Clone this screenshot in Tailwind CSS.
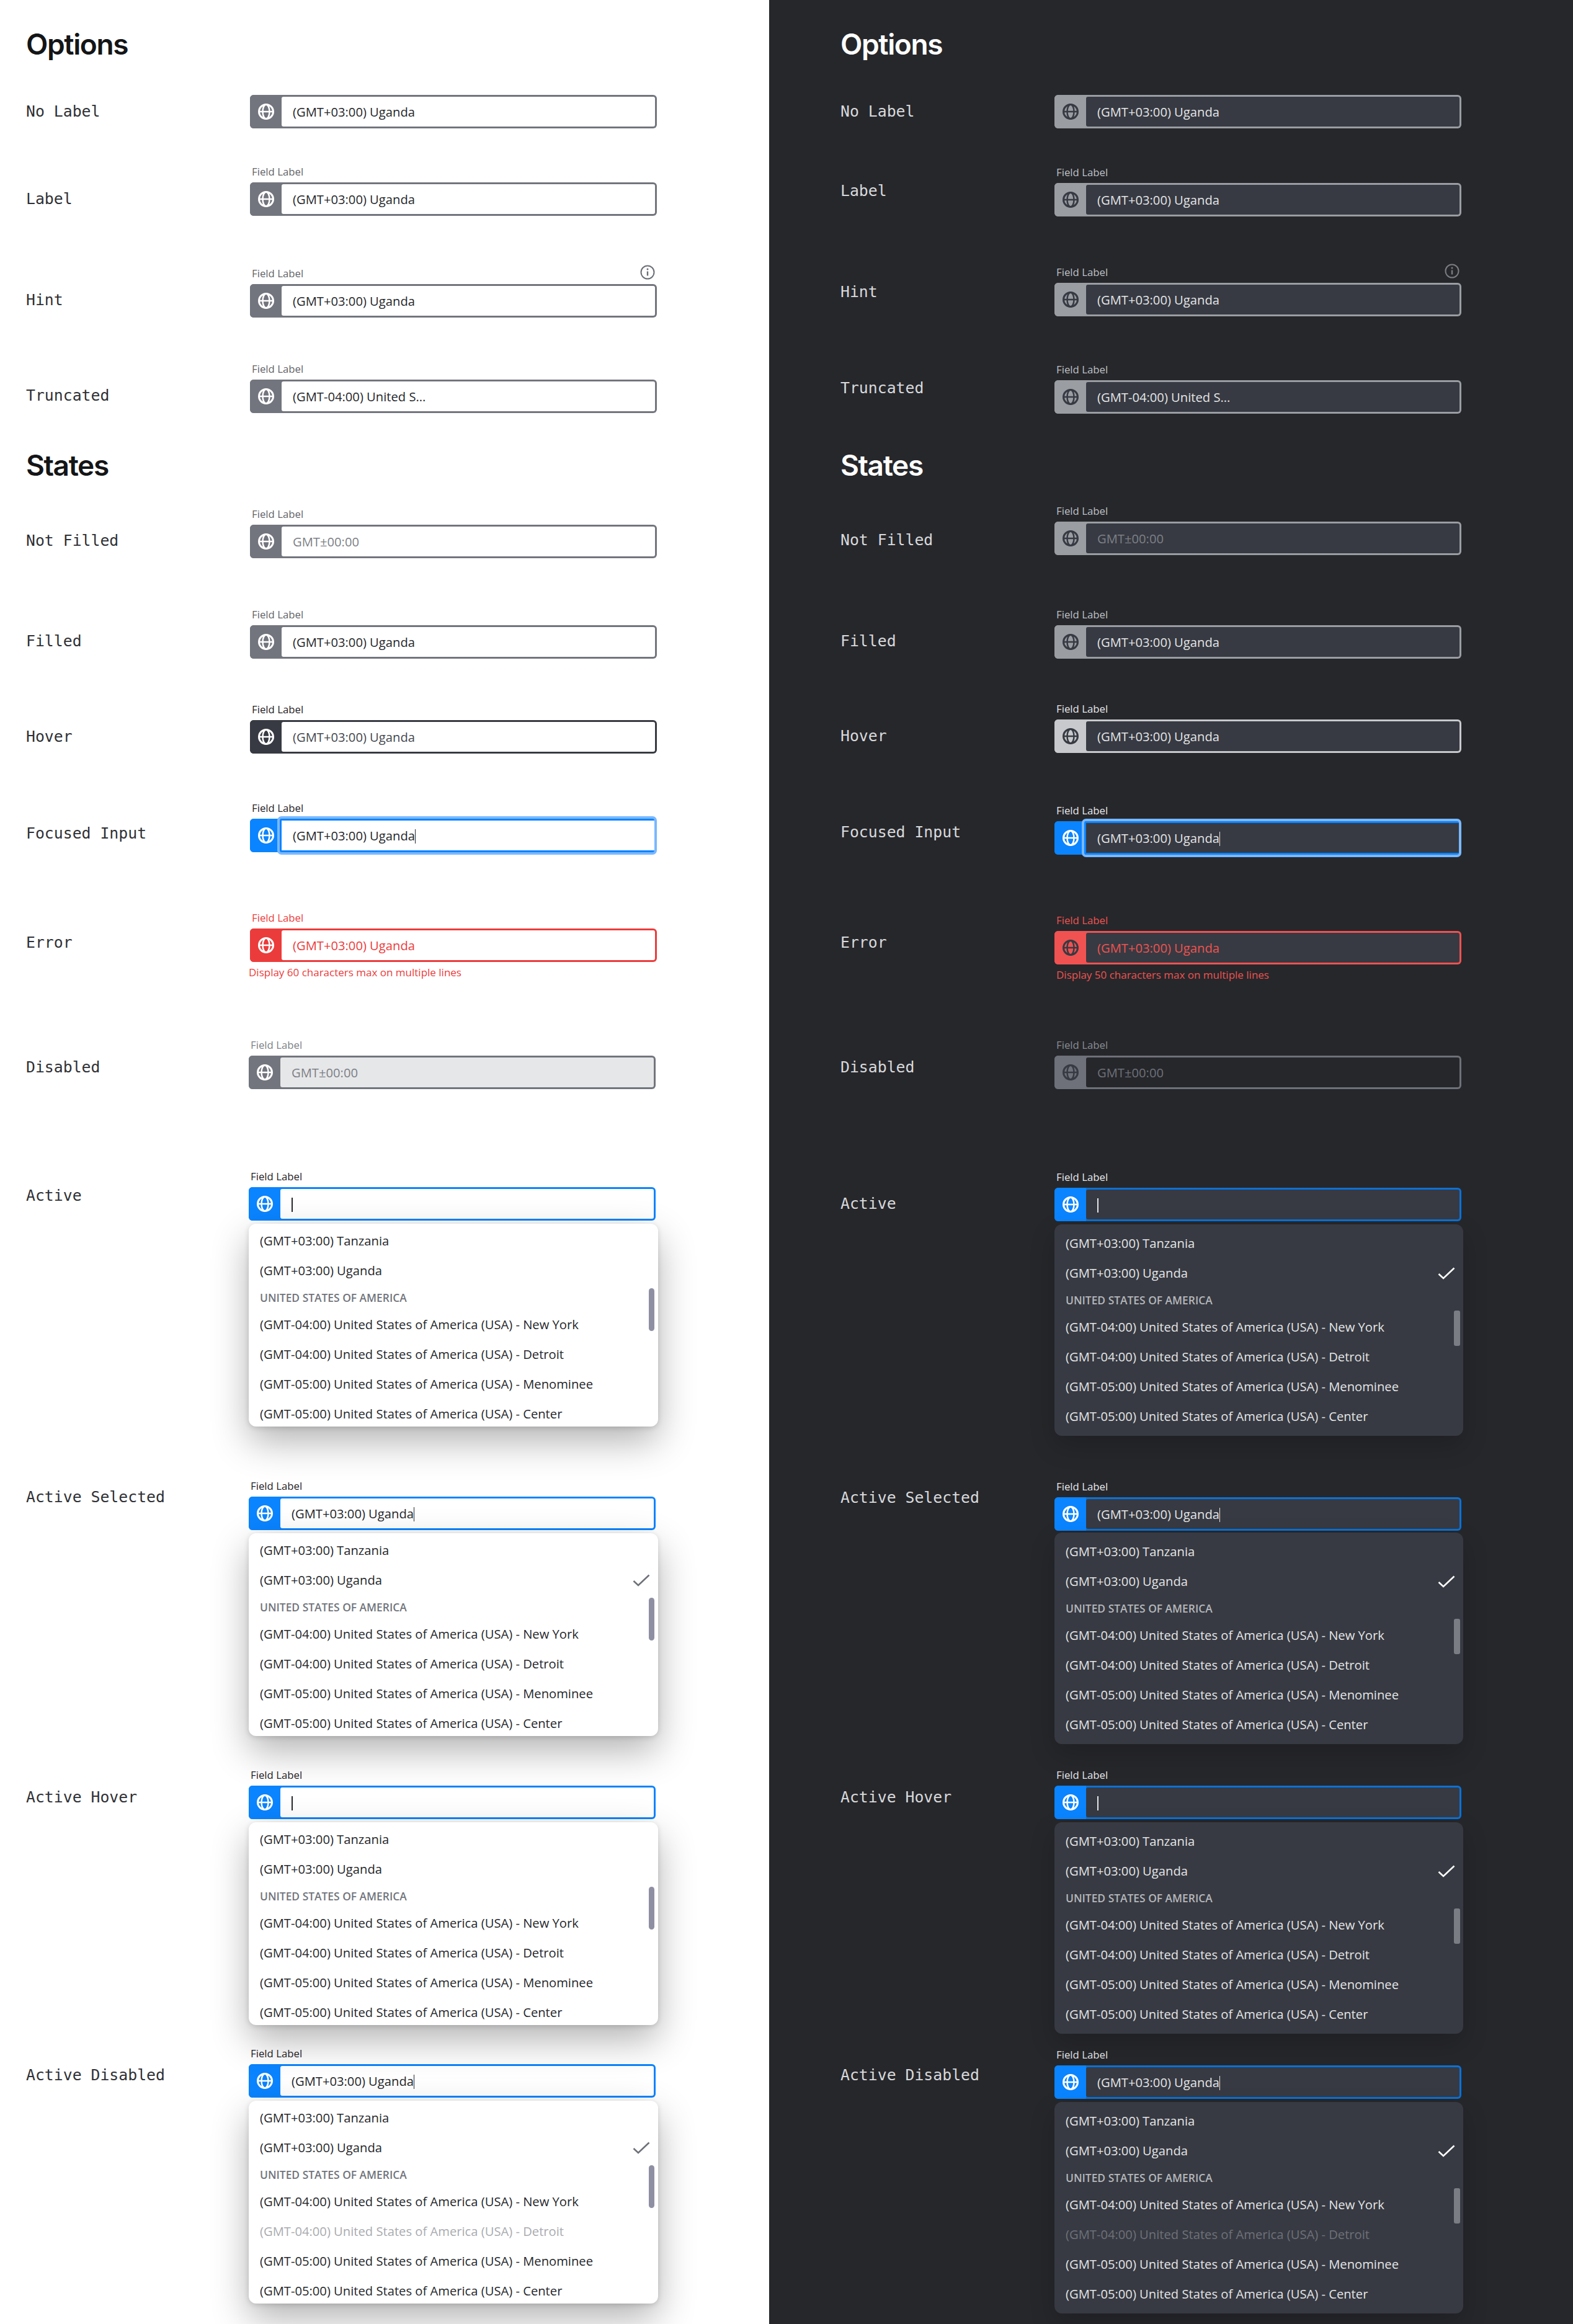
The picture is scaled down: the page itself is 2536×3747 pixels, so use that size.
<!DOCTYPE html>
<html lang="en">
<head>
  <meta charset="UTF-8" />
  <title>Timezone Select</title>
  <script src="https://cdn.jsdelivr.net/npm/@tailwindcss/browser@4"></script>
</head>
<body class="font-['Open_Sans',sans-serif]">
  <div class="flex w-[2536px] h-[3747px] overflow-hidden">
    <div id="light" class="w-[1240px] h-full shrink-0 bg-white pl-[42px] pt-[43px] text-[#25272b]"></div>
    <div id="dark" class="w-[1296px] h-full shrink-0 bg-[#26272b] pl-[115px] pt-[43px] text-white"></div>
  </div>

  <script>
    const globe = `<svg class="w-[26px] h-[26px]" viewBox="0 0 26 26" fill="none" stroke="currentColor"><circle cx="13" cy="13" r="11.5" stroke-width="3"/><ellipse cx="13" cy="13" rx="5.5" ry="11.5" stroke-width="2.5"/><path d="M2 13h22" stroke-width="2.5"/></svg>`;
    const info = `<svg class="w-[24px] h-[24px] mb-[4px] mr-[3px]" viewBox="0 0 24 24" fill="none" stroke="currentColor"><circle cx="12" cy="12" r="10.5" stroke-width="2"/><path d="M12 10.5v7" stroke-width="2.4"/><circle cx="12" cy="7" r="1.5" fill="currentColor" stroke="none"/></svg>`;
    const check = `<svg class="w-[28px] h-[20px]" viewBox="0 0 28 20" fill="none" stroke="currentColor" stroke-width="2.6"><path d="M1.5 11l7.5 7L26.5 1.5"/></svg>`;

    const themes = {
      light: {
        title: "text-[#141517]",
        rowLabel: "w-[361px] shrink-0 text-[#2f3135]",
        hint: "text-[#6b6f76]",
        helper: "text-[#ec3b3b]",
        checkColor: "absolute right-[13px] top-[66px] text-[#6e7178]",
        menu: "relative z-10 mt-[5px] w-[660px] h-[327px] overflow-hidden rounded-[12px] bg-white pt-[5px] shadow-[0_24px_60px_rgba(0,0,0,0.3),0_2px_8px_rgba(0,0,0,0.15)]",
        thumb: "absolute right-[6px] top-[104px] w-[9px] h-[69px] rounded-full bg-[#8e8fa2]",
        group: "text-[#71747c]",
        item: "text-[#25272b]",
        itemOff: "text-[#a9abaf]",
        caret: "bg-[#25272b]",
        normal: { label: "text-[#5f6368]", shell: "bg-[#72757d]", block: "bg-[#72757d] text-white", inner: "bg-white", text: "text-[#25272b]" },
        empty: { label: "text-[#5f6368]", shell: "bg-[#72757d]", block: "bg-[#72757d] text-white", inner: "bg-white", text: "text-[#7c7f86]" },
        hover: { label: "text-[#1f2125]", shell: "bg-[#373a42]", block: "bg-[#373a42] text-white", inner: "bg-white", text: "text-[#44474e]" },
        focus: { label: "text-[#1f2125]", shell: "bg-[#0a84ff]", block: "bg-[#0a84ff] text-white", inner: "bg-white", text: "text-[#25272b]" },
        error: { label: "text-[#ec3b3b]", shell: "bg-[#ec3b3b]", block: "bg-[#ec3b3b] text-white", inner: "bg-white", text: "text-[#ec3b3b]" },
        disabled: { label: "text-[#7c7f86]", shell: "bg-[#72757d]", block: "bg-[#72757d] text-white", inner: "bg-[#e6e7e9]", text: "text-[#7c7f86]" },
        active: { label: "text-[#1f2125]", shell: "bg-[#0a84ff]", block: "bg-[#0a84ff] text-white", inner: "bg-white", text: "text-[#25272b]" }
      },
      dark: {
        title: "text-white",
        rowLabel: "w-[345px] shrink-0 text-[#d8d9dc]",
        hint: "text-[#7a7d83]",
        helper: "text-[#ef5350]",
        checkColor: "absolute right-[13px] top-[69px] text-white",
        menu: "relative z-10 mt-[5px] w-[659px] h-[341px] overflow-hidden rounded-[12px] bg-[#373a42] pt-[8px] shadow-[0_16px_40px_rgba(0,0,0,0.18)]",
        thumb: "absolute right-[5px] top-[139px] w-[10px] h-[57px] rounded-[3px] bg-[#7a7d84]",
        group: "text-[#b5b7bb]",
        item: "text-[#e4e5e7]",
        itemOff: "text-[#6e7179]",
        caret: "bg-[#e4e5e7]",
        normal: { label: "text-[#bfc1c5]", shell: "bg-[#9a9da2]", block: "bg-[#9a9da2] text-[#373a42]", inner: "bg-[#373a42]", text: "text-[#e4e5e7]" },
        empty: { label: "text-[#bfc1c5]", shell: "bg-[#9a9da2]", block: "bg-[#9a9da2] text-[#373a42]", inner: "bg-[#373a42]", text: "text-[#7d8087]" },
        hover: { label: "text-[#e8e9ea]", shell: "bg-[#c8c9cc]", block: "bg-[#c8c9cc] text-[#373a42]", inner: "bg-[#373a42]", text: "text-[#e4e5e7]" },
        focus: { label: "text-[#e8e9ea]", shell: "bg-[#0a84ff]", block: "bg-[#0a84ff] text-white", inner: "bg-[#373a42]", text: "text-[#e4e5e7]" },
        error: { label: "text-[#ef5350]", shell: "bg-[#f05252]", block: "bg-[#f05252] text-[#373a42]", inner: "bg-[#373a42]", text: "text-[#ef5350]" },
        disabled: { label: "text-[#8a8d92]", shell: "bg-[#6e7179]", block: "bg-[#6e7179] text-[#373a42]", inner: "bg-[#26272b]", text: "text-[#6e7179]" },
        active: { label: "text-[#e8e9ea]", shell: "bg-[#0a72d8]", block: "bg-[#0a84ff] text-white", inner: "bg-[#373a42]", text: "text-[#e4e5e7]" }
      }
    };

    function field(t, r) {
      const s = t[r.state];
      const caret = r.caret ? `<span class="inline-block w-[1.5px] h-[23px] ${t.caret} align-[-5px]"></span>` : "";
      const innerClass = r.state === "focus"
        ? "relative flex-1 ml-[-3px] my-0 mr-[4px] border-y-[3px] border-l-[3px] border-[#0a84ff] rounded-[3px] pl-[18px] flex items-center shadow-[0_0_0_4px_#7ab8ff] " + s.inner + " " + s.text
        : "flex-1 my-[3px] mr-[3px] rounded-[3px] pl-[18px] flex items-center " + s.inner + " " + s.text;
      return `<div class="flex h-[54px] rounded-[6px] ${s.shell}">
        <div class="w-[51px] shrink-0 flex items-center justify-center rounded-l-[6px] ${s.block}">${globe}</div>
        <div class="${innerClass}"><span class="text-[20.2px] leading-[24px] whitespace-pre">${r.value || ""}${caret}</span></div>
      </div>`;
    }

    function menu(t, r) {
      const option = (text, cls) => `<div class="h-[48px] pl-[18px] pb-[3px] flex items-center text-[20.2px] ${cls}">${text}</div>`;
      return `<div class="${t.menu} ${r.menuShift || ""}">
        ${option("(GMT+03:00) Tanzania", t.item)}
        ${option("(GMT+03:00) Uganda", t.item)}
        <div class="h-[39px] pl-[18px] text-[17.4px] leading-[36px] font-semibold ${t.group}">UNITED STATES OF AMERICA</div>
        ${option("(GMT-04:00) United States of America (USA) - New York", t.item)}
        ${option("(GMT-04:00) United States of America (USA) - Detroit", r.offItem ? t.itemOff : t.item)}
        ${option("(GMT-05:00) United States of America (USA) - Menominee", t.item)}
        ${option("(GMT-05:00) United States of America (USA) - Center", t.item)}
        <div class="${t.thumb}"></div>
        ${r.check ? `<div class="${t.checkColor}">${check}</div>` : ""}
      </div>`;
    }

    function render(t, rows) {
      return rows.map(r => {
        if (r.heading) return `<h2 class="${r.gap} h-[56px] leading-[56px] font-['Inter',sans-serif] text-[46px] tracking-[-0.03em] font-semibold ${t.title}">${r.heading}</h2>`;
        const s = t[r.state];
        const label = r.noLabel ? "" : `<div class="flex items-center justify-between h-[24px] mb-[5px] pl-[3px] text-[16.8px] ${s.label}"><span>Field Label</span>${r.hint ? `<span class="${t.hint}">${info}</span>` : ""}</div>`;
        return `<div class="flex ${r.gap}">
          <div class="${t.rowLabel} ${r.offset} font-['DejaVu_Sans_Mono',monospace] text-[24.8px] leading-[32px]">${r.name}</div>
          <div class="w-[656px] ${r.shift || ""}">
            ${label}
            ${field(t, r)}
            ${r.helper ? `<div class="mt-[5px] h-[24px] leading-[24px] text-[17px] ${t.helper} ${r.helperClass}">${r.helper}</div>` : ""}
            ${r.open ? menu(t, r) : ""}
          </div>
        </div>`;
      }).join("");
    }

    const uganda = "(GMT+03:00) Uganda";
    const lightRows = [
      { heading: "Options", gap: "mt-0" },
      { name: "No Label", gap: "mt-[54px]", offset: "mt-[11px]", state: "normal", value: uganda, noLabel: true },
      { name: "Label", gap: "mt-[58px]", offset: "mt-[40px]", state: "normal", value: uganda },
      { name: "Hint", gap: "mt-[81px]", offset: "mt-[39px]", state: "normal", value: uganda, hint: true },
      { name: "Truncated", gap: "mt-[71px]", offset: "mt-[39px]", state: "normal", value: "(GMT-04:00) United S..." },
      { heading: "States", gap: "mt-[56px]" },
      { name: "Not Filled", gap: "mt-[39px]", offset: "mt-[39px]", state: "empty", value: "GMT±00:00" },
      { name: "Filled", gap: "mt-[79px]", offset: "mt-[39px]", state: "normal", value: uganda },
      { name: "Hover", gap: "mt-[70px]", offset: "mt-[40px]", state: "hover", value: uganda },
      { name: "Focused Input", gap: "mt-[76px]", offset: "mt-[37px]", state: "focus", value: uganda, caret: true },
      { name: "Error", gap: "mt-[94px]", offset: "mt-[36px]", state: "error", value: uganda, helper: "Display 60 characters max on multiple lines", helperClass: "ml-[-2px]" },
      { name: "Disabled", gap: "mt-[93px]", offset: "mt-[32px]", state: "disabled", value: "GMT±00:00", shift: "ml-[-2px]" },
      { name: "Active", gap: "mt-[129px]", offset: "mt-[27px]", state: "active", caret: true, open: true, shift: "ml-[-2px]" },
      { name: "Active Selected", gap: "mt-[84px]", offset: "mt-[14px]", state: "active", value: uganda, caret: true, open: true, check: true, shift: "ml-[-2px]" },
      { name: "Active Hover", gap: "mt-[51px]", offset: "mt-[32px]", state: "active", caret: true, open: true, shift: "ml-[-2px]" },
      { name: "Active Disabled", gap: "mt-[34px]", offset: "mt-[31px]", state: "active", value: uganda, caret: true, open: true, check: true, offItem: true, shift: "ml-[-2px]" }
    ];
    const darkRows = [
      { heading: "Options", gap: "mt-0" },
      { name: "No Label", gap: "mt-[54px]", offset: "mt-[11px]", state: "normal", value: uganda, noLabel: true },
      { name: "Label", gap: "mt-[59px]", offset: "mt-[26px]", state: "normal", value: uganda },
      { name: "Hint", gap: "mt-[78px]", offset: "mt-[28px]", state: "normal", value: uganda, hint: true },
      { name: "Truncated", gap: "mt-[74px]", offset: "mt-[26px]", state: "normal", value: "(GMT-04:00) United S..." },
      { heading: "States", gap: "mt-[55px]" },
      { name: "Not Filled", gap: "mt-[34px]", offset: "mt-[43px]", state: "empty", value: "GMT±00:00" },
      { name: "Filled", gap: "mt-[84px]", offset: "mt-[39px]", state: "normal", value: uganda },
      { name: "Hover", gap: "mt-[69px]", offset: "mt-[40px]", state: "hover", value: uganda },
      { name: "Focused Input", gap: "mt-[81px]", offset: "mt-[31px]", state: "focus", value: uganda, caret: true },
      { name: "Error", gap: "mt-[94px]", offset: "mt-[32px]", state: "error", value: uganda, helper: "Display 50 characters max on multiple lines", helperClass: "ml-[3px]" },
      { name: "Disabled", gap: "mt-[89px]", offset: "mt-[32px]", state: "disabled", value: "GMT±00:00" },
      { name: "Active", gap: "mt-[130px]", offset: "mt-[39px]", state: "active", caret: true, open: true, check: true },
      { name: "Active Selected", gap: "mt-[70px]", offset: "mt-[14px]", state: "active", value: uganda, caret: true, open: true, check: true, menuShift: "-top-[2px]" },
      { name: "Active Hover", gap: "mt-[36px]", offset: "mt-[32px]", state: "active", caret: true, open: true, check: true },
      { name: "Active Disabled", gap: "mt-[22px]", offset: "mt-[29px]", state: "active", value: uganda, caret: true, open: true, check: true, offItem: true }
    ];

    document.getElementById("light").innerHTML = render(themes.light, lightRows);
    document.getElementById("dark").innerHTML = render(themes.dark, darkRows);
  </script>
</body>
</html>
